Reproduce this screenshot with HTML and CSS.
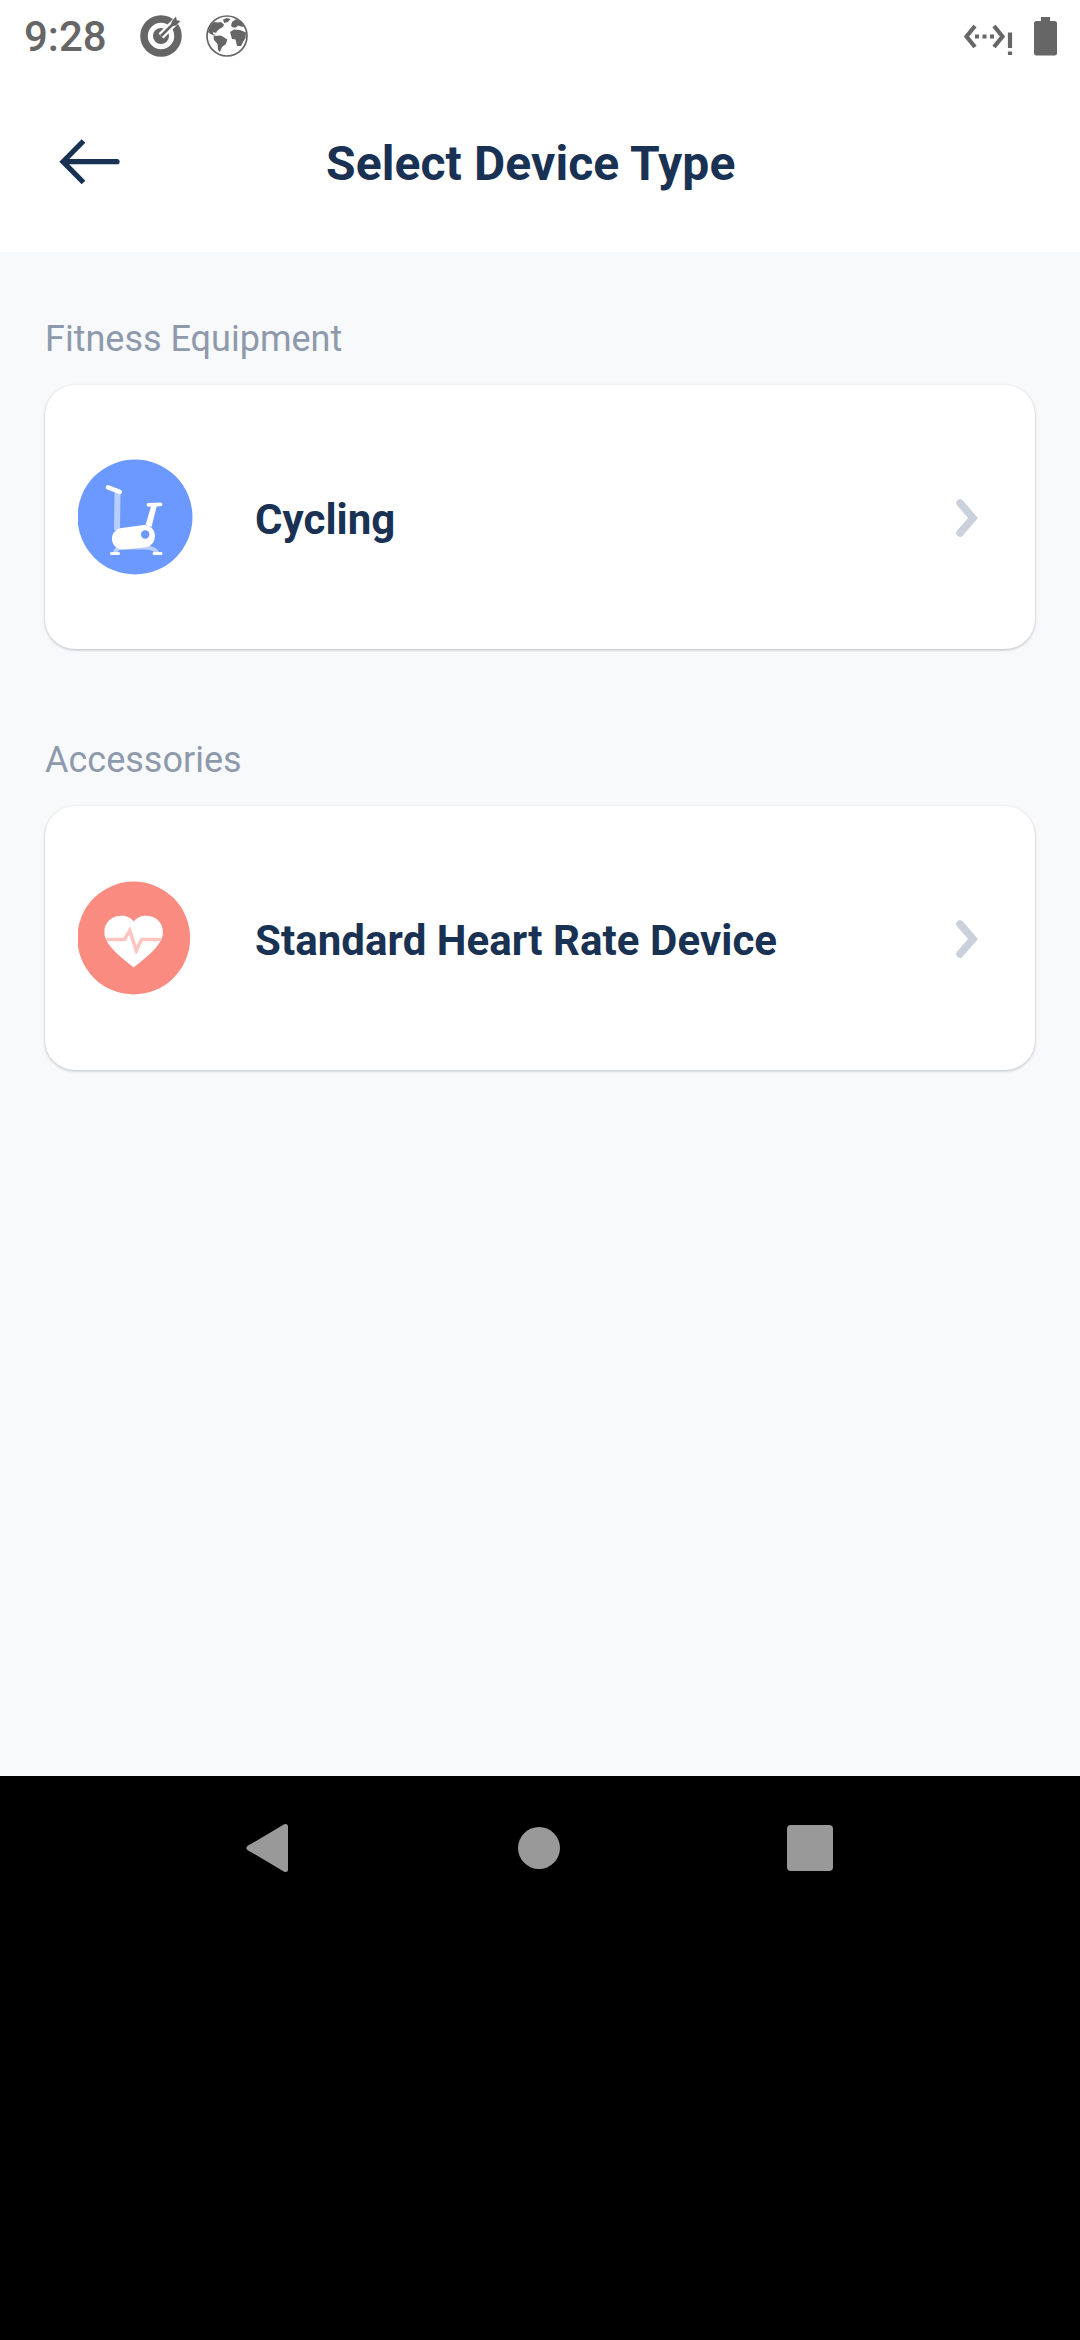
FILE: index.html
```html
<!DOCTYPE html>
<html lang="en">
<head>
<meta charset="utf-8">
<title>Select Device Type</title>
<link rel="stylesheet" href="styles.css">
</head>
<body>
<div class="screen">
  <div class="status">
    <span class="time">9:28</span>
    <svg class="status-target" width="44" height="44" viewBox="0 0 44 44">
      <circle cx="22" cy="22" r="17" fill="none" stroke="#666" stroke-width="7.500"/>
      <circle cx="22" cy="22" r="8" fill="#666"/>
      <path d="M22 22 41 3" stroke="#fff" stroke-width="7"/>
      <path d="M22 22 37 7" stroke="#666" stroke-width="2.600"/>
      <path d="M31.500 12.500 33 7l4-4.500.8 3.700 3.700.8-4.500 4.500z" fill="#666"/>
    </svg>
    <svg class="status-globe" width="44" height="44" viewBox="0 0 44 44" fill="#666">
      <circle cx="22" cy="22" r="20" fill="none" stroke="#666" stroke-width="1.700"/>
      <path d="M3 18 5 12 9 8 13 8.500 16 8 19 10.500 18 13 15 14.500 12 17 11 19 8.500 18 8 20 11 21 9 21.500 5.500 20zM18 5.500 22 4 25.500 5 23 8 19 9zM26 12 27 8 31 5 36 8 39 13 36 12.500 33 11.500 31 13.500 28 13.500z"/>
      <path d="M8.500 22 16 21.500 22.300 25.500 21 30 17 33 15 38 13 36 12.500 30 9 26zM25 18 29 15.500 35 16 41 18.500 40.500 24 38 28 36 32 32 32 30.500 25.500 27 25z"/>
    </svg>
    <svg class="status-net" width="52" height="36" viewBox="0 0 52 36" fill="none" stroke="#666">
      <path d="M13 6 4.500 16.500 13 27M32 6 40.500 16.500 32 27" stroke-width="4.200"/>
      <path d="M13 16.500H34" stroke-width="4" stroke-dasharray="4 3.500"/>
      <path d="M48 12.500v15.500M48 31.500v3.500" stroke-width="4.200"/>
    </svg>
    <svg class="status-battery" width="23" height="39" viewBox="0 0 23 39" fill="#666"><path d="M7 0h9v4h4.500A2.500 2.500 0 0 1 23 6.500v29.500a2.500 2.500 0 0 1-2.500 2.500h-18A2.500 2.500 0 0 1 0 36V6.500A2.500 2.500 0 0 1 2.500 4H7z"/></svg>
  </div>
  <header class="header">
    <svg width="62" height="48" viewBox="0 0 62 48" fill="none" stroke="#193153" stroke-width="5.200"><path d="M24.500 3 4 23.700 24.500 44.500"/><path d="M5 23.700H58" stroke-linecap="round"/></svg>
    <h1 class="title">Select Device Type</h1>
  </header>
  <main class="content">
    <h2 class="label">Fitness Equipment</h2>
    <div class="card">
      <svg class="badge" width="116" height="116" viewBox="0 0 116 116">
        <circle cx="57" cy="58" r="57.500" fill="#6c99ff"/>
        <path d="M36.500 33h6l-.5 38h-6z" fill="#b9ceff"/>
        <path d="M37 94Q38 88.500 45 88.500H66Q77 88.500 79.500 94" fill="none" stroke="#b9ceff" stroke-width="4"/>
        <path d="M30 28.300 41.800 32.800" stroke="#fff" stroke-width="4.600" stroke-linecap="round"/>
        <path d="M70.500 45.800 82.500 45.300" stroke="#fff" stroke-width="3.800" stroke-linecap="round"/>
        <path d="M73.500 46h5.500L73.500 68 67.500 66z" fill="#fff"/>
        <path d="M43.500 69 66 66A10.500 10.500 0 0 1 77 76Q77 86.500 68 88.300L46 90.500A10.800 10.800 0 0 1 43.500 69z" fill="#fff"/>
        <circle cx="67.200" cy="75.500" r="4.200" fill="#6c99ff"/>
        <path d="M33.500 94.400H40.500M76 94.400H83" stroke="#fff" stroke-width="3" stroke-linecap="round"/>
      </svg>
      <span class="name">Cycling</span>
      <svg class="chevron" width="24" height="40" viewBox="0 0 24 40" fill="none" stroke="#cad1da" stroke-width="7.500" stroke-linecap="round"><path d="M5 5 18 20 5 35"/></svg>
    </div>
    <h2 class="label">Accessories</h2>
    <div class="card">
      <svg class="badge" width="116" height="116" viewBox="0 0 116 116">
        <circle cx="55.700" cy="58" r="56.400" fill="#f98b80"/>
        <path d="M55.700 87.500C47 80 26.300 66 26.300 52.500 26.300 34 49 31.500 55.700 41.500 62.500 31.500 85 34 85 52.500 85 66 64.500 80 55.700 87.500z" fill="#fff"/>
        <path d="M28.500 59.500H46.500L51.700 50.500 58.300 70.500 63.500 59.500H83.500" fill="none" stroke="#fcc5c0" stroke-width="3.500"/>
      </svg>
      <span class="name">Standard Heart Rate Device</span>
      <svg class="chevron" width="24" height="40" viewBox="0 0 24 40" fill="none" stroke="#cad1da" stroke-width="7.500" stroke-linecap="round"><path d="M5 5 18 20 5 35"/></svg>
    </div>
  </main>
  <nav class="nav">
    <svg width="46" height="52" viewBox="0 0 46 52"><path d="M4 26 40.500 4.500V47.500z" fill="#999" stroke="#999" stroke-width="5" stroke-linejoin="round"/></svg>
    <svg width="42" height="42" viewBox="0 0 42 42"><circle cx="21" cy="21" r="21" fill="#999"/></svg>
    <svg width="46" height="46" viewBox="0 0 46 46"><rect width="46" height="46" rx="4" fill="#999"/></svg>
  </nav>
</div>
</body>
</html>
```

FILE: styles.css
```css
* { box-sizing: border-box; }
body { margin: 0; background: #000; font-family: Roboto, sans-serif; }
svg { display: block; flex: none; }
.screen { width: 1080px; height: 2340px; display: flex; flex-direction: column; background: #000; }
.status { height: 72px; padding: 0 24px; display: flex; align-items: center; background: #fff; }
.time { width: 115px; font-size: 42px; font-weight: 500; line-height: 72px; color: #666; padding-top: 2px; }
.status-globe { margin-left: 22px; }
.status-net { margin-left: auto; margin-top: 4px; }
.status-battery { margin-left: 20px; }
.status { padding-right: 23px; }
.header { height: 180px; padding: 0 59px; display: flex; align-items: center; background: #fff; }
.title { margin: 3px 0 0; padding-left: 205px; font-size: 48px; font-weight: 700; line-height: 56px; letter-spacing: .1px; color: #193153; white-space: nowrap; }
.content { height: 1524px; padding: 60px 45px 0; background: #f7f9fb; }
.label { margin: 0 0 19px; height: 54px; font-size: 36px; font-weight: 400; line-height: 54px; color: #8e9aac; }
.card { height: 264px; margin-bottom: 84px; padding: 0 56px 0 33px; display: flex; align-items: center; background: #fff; border-radius: 30px; box-shadow: 0 1px 3px rgba(30, 40, 50, .28); }
.name { flex: 1; padding: 5px 0 0 61px; font-size: 42px; font-weight: 700; line-height: 50px; letter-spacing: .06px; color: #193153; white-space: nowrap; }
.chevron { margin-top: 1px; }
.nav { height: 144px; padding: 0 247px 0 245px; display: flex; align-items: center; justify-content: space-between; background: #000; }
```
